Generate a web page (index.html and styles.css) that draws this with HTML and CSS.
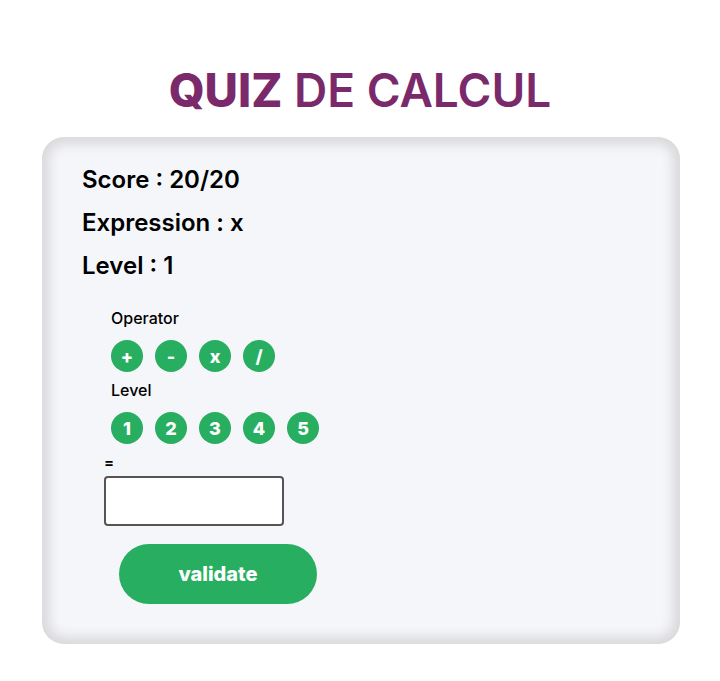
FILE: index.html
```html
<!DOCTYPE html>
<html lang="fr">
<head>
<meta charset="utf-8">
<title>Quiz de calcul</title>
<link rel="stylesheet" href="styles.css">
</head>
<body>
<h1 class="title"><span class="strong">QUIZ</span> DE CALCUL</h1>
<main class="card">
  <p class="info">Score : 20/20</p>
  <p class="info">Expression : x</p>
  <p class="info">Level : 1</p>
  <section class="controls">
    <div class="label">Operator</div>
    <div class="row">
      <button class="round">+</button>
      <button class="round">-</button>
      <button class="round">x</button>
      <button class="round">/</button>
    </div>
    <div class="label">Level</div>
    <div class="row">
      <button class="round">1</button>
      <button class="round">2</button>
      <button class="round">3</button>
      <button class="round">4</button>
      <button class="round">5</button>
    </div>
  </section>
  <div class="answer">
    <div class="eq">=</div>
    <input class="field" type="text">
  </div>
  <button class="validate">validate</button>
</main>
</body>
</html>
```
FILE: styles.css
```css
* { box-sizing: border-box; }
body {
  margin: 0;
  background: #ffffff;
  font-family: "Inter", "Open Sans", sans-serif;
  color: #000;
}
.title {
  margin: 62px 0 19px;
  text-align: center;
  font-size: 46px;
  line-height: 56px;
  font-weight: 600;
  color: #7a2a6b;
  letter-spacing: 0;
}
.title .strong { font-weight: 800; }
.card {
  width: 638px;
  margin: 0 0 0 42px;
  background: #f5f6fa;
  border-radius: 22px;
  box-shadow: inset 0 0 12px 7px #d9d8da;
  padding: 21px 40px 40px 40px;
}
.info {
  margin: 0;
  font-size: 24px;
  line-height: 43px;
  font-weight: 600;
  letter-spacing: 0;
}
.controls {
  margin: 21px 0 0 29px;
}
.label {
  font-size: 16px;
  line-height: 20px;
  font-weight: 500;
}
.row {
  display: flex;
  gap: 12px;
  margin: 12px 0 8px;
}
.row:last-child { margin-bottom: 9px; }
.round {
  width: 32px;
  height: 32px;
  border: 0;
  border-radius: 50%;
  padding: 0;
  background: #27ae60;
  color: #fff;
  font-family: inherit;
  font-size: 18px;
  font-weight: 800;
  display: flex;
  align-items: center;
  justify-content: center;
}
.answer {
  margin: 0 0 0 22px;
}
.eq {
  font-size: 15px;
  line-height: 20px;
  font-weight: 600;
}
.field {
  display: block;
  margin-top: 3px;
  width: 180px;
  height: 50px;
  border: 2px solid #555;
  border-radius: 4px;
  background: #fff;
}
.validate {
  display: block;
  margin: 18px 0 0 37px;
  width: 198px;
  height: 60px;
  border: 0;
  border-radius: 30px;
  background: #27ae60;
  color: #fff;
  font-family: inherit;
  font-size: 20px;
  font-weight: 800;
}
```
